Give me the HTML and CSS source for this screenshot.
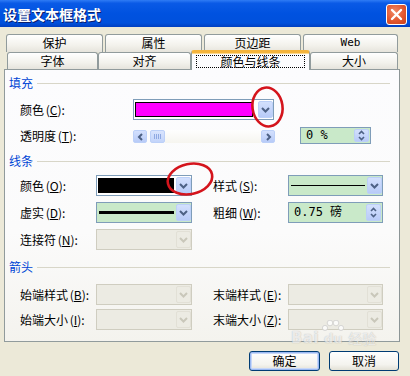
FILE: index.html
```html
<!DOCTYPE html>
<html lang="zh-CN">
<head>
<meta charset="utf-8">
<title>设置文本框格式</title>
<link rel="stylesheet" href="styles.css">
</head>
<body>
<div class="window">
  <div class="titlebar">
    <span class="title">设置文本框格式</span>
    <span class="close"><svg width="13" height="13" viewBox="0 0 13 13"><path d="M2 2L11 11M11 2L2 11" stroke="#fff" stroke-width="2.4" stroke-linecap="round"/></svg></span>
  </div>
  <div class="tabs">
    <div class="tabrow row1">
      <div class="tab w97">保护</div>
      <div class="tab w97">属性</div>
      <div class="tab w97">页边距</div>
      <div class="tab w95 latin">Web</div>
    </div>
    <div class="tabrow row2">
      <div class="tab w91">字体</div>
      <div class="tab w93">对齐</div>
      <div class="tab sel w119"><span class="focus">颜色与线条</span></div>
      <div class="tab w88">大小</div>
    </div>
  </div>
  <div class="panel">
    <div class="sec-head">填充</div>
    <div class="row r-fill1">
      <span class="lbl l113">颜色 (<u>C</u>):</span>
      <div class="combo w141"><span class="swatch magenta"></span><span class="dbtn"><svg width="9" height="6" viewBox="0 0 9 6"><path d="M1 1L4.5 4.5L8 1" fill="none" stroke="#4d6185" stroke-width="2"/></svg></span></div>
    </div>
    <div class="row r-fill2">
      <span class="lbl l113">透明度 (<u>T</u>):</span>
      <div class="scroll">
        <span class="sbtn"><svg width="7" height="8" viewBox="0 0 7 8"><path d="M5 1L2 4L5 7" fill="none" stroke="#4d6185" stroke-width="2"/></svg></span>
        <span class="thumb"><span class="grip"></span></span>
        <span class="track"></span>
        <span class="sbtn"><svg width="7" height="8" viewBox="0 0 7 8"><path d="M2 1L5 4L2 7" fill="none" stroke="#4d6185" stroke-width="2"/></svg></span>
      </div>
      <div class="spin w71"><span class="val">0 %</span><span class="spbtn"><svg width="7" height="11" viewBox="0 0 7 11"><path d="M1 4L3.5 1.5L6 4M1 7L3.5 9.5L6 7" fill="none" stroke="#4d6185" stroke-width="1.6"/></svg></span></div>
    </div>

    <div class="sec-head h2">线条</div>
    <div class="row r-l1">
      <span class="lbl l76">颜色 (<u>O</u>):</span>
      <div class="combo w96"><span class="swatch black"></span><span class="dbtn"><svg width="9" height="6" viewBox="0 0 9 6"><path d="M1 1L4.5 4.5L8 1" fill="none" stroke="#4d6185" stroke-width="2"/></svg></span></div>
      <span class="lbl l75 col2">样式 (<u>S</u>):</span>
      <div class="combo green w95"><span class="linebox"><span class="ln thin"></span></span><span class="dbtn"><svg width="9" height="6" viewBox="0 0 9 6"><path d="M1 1L4.5 4.5L8 1" fill="none" stroke="#4d6185" stroke-width="2"/></svg></span></div>
    </div>
    <div class="row r-l2">
      <span class="lbl l76">虚实 (<u>D</u>):</span>
      <div class="combo green w96"><span class="linebox"><span class="ln thick"></span></span><span class="dbtn"><svg width="9" height="6" viewBox="0 0 9 6"><path d="M1 1L4.5 4.5L8 1" fill="none" stroke="#4d6185" stroke-width="2"/></svg></span></div>
      <span class="lbl l75 col2">粗细 (<u>W</u>):</span>
      <div class="spin w95"><span class="val">0.75 磅</span><span class="spbtn"><svg width="7" height="11" viewBox="0 0 7 11"><path d="M1 4L3.5 1.5L6 4M1 7L3.5 9.5L6 7" fill="none" stroke="#4d6185" stroke-width="1.6"/></svg></span></div>
    </div>
    <div class="row r-l3">
      <span class="lbl l76">连接符 (<u>N</u>):</span>
      <div class="combo dis w96"><span class="fill"></span><span class="dbtn"><svg width="9" height="6" viewBox="0 0 9 6"><path d="M1 1L4.5 4.5L8 1" fill="none" stroke="#c9c7ba" stroke-width="2"/></svg></span></div>
    </div>

    <div class="sec-head h3">箭头</div>
    <div class="row r-a1">
      <span class="lbl l76">始端样式 (<u>B</u>):</span>
      <div class="combo dis w96"><span class="fill"></span><span class="dbtn"><svg width="9" height="6" viewBox="0 0 9 6"><path d="M1 1L4.5 4.5L8 1" fill="none" stroke="#c9c7ba" stroke-width="2"/></svg></span></div>
      <span class="lbl l75 col2">末端样式 (<u>E</u>):</span>
      <div class="combo dis w95"><span class="fill"></span><span class="dbtn"><svg width="9" height="6" viewBox="0 0 9 6"><path d="M1 1L4.5 4.5L8 1" fill="none" stroke="#c9c7ba" stroke-width="2"/></svg></span></div>
    </div>
    <div class="row r-a2">
      <span class="lbl l76">始端大小 (<u>I</u>):</span>
      <div class="combo dis w96"><span class="fill"></span><span class="dbtn"><svg width="9" height="6" viewBox="0 0 9 6"><path d="M1 1L4.5 4.5L8 1" fill="none" stroke="#c9c7ba" stroke-width="2"/></svg></span></div>
      <span class="lbl l75 col2">末端大小 (<u>Z</u>):</span>
      <div class="combo dis w95"><span class="fill"></span><span class="dbtn"><svg width="9" height="6" viewBox="0 0 9 6"><path d="M1 1L4.5 4.5L8 1" fill="none" stroke="#c9c7ba" stroke-width="2"/></svg></span></div>
    </div>
  </div>
  <div class="buttons">
    <button class="btn default">确定</button>
    <button class="btn">取消</button>
  </div>

  <div class="watermark">
    <span class="wm-bai">Bai</span>
    <span class="wm-paw">
      <svg class="paw" width="22" height="12" viewBox="0 0 22 12"><circle cx="3" cy="8" r="2.6" fill="#fff" stroke="#c8c8c8" stroke-width="0.8"/><circle cx="8" cy="3" r="2.8" fill="#fff" stroke="#c8c8c8" stroke-width="0.8"/><circle cx="14" cy="3" r="2.8" fill="#fff" stroke="#c8c8c8" stroke-width="0.8"/><circle cx="19" cy="8" r="2.6" fill="#fff" stroke="#c8c8c8" stroke-width="0.8"/></svg>
      <span class="wm-du">du</span>
    </span>
    <span class="wm-cn">经验</span>
  </div>
  <svg class="annot" width="410" height="376" viewBox="0 0 410 376">
    <ellipse cx="267.5" cy="107" rx="15" ry="19.5" transform="rotate(-8 267.5 107)" fill="none" stroke="#d4141c" stroke-width="2.6"/>
    <ellipse cx="190" cy="179" rx="22.5" ry="15" transform="rotate(-12 190 179)" fill="none" stroke="#d4141c" stroke-width="2.6"/>
  </svg>
</div>
</body>
</html>
```
FILE: styles.css
```css
* { box-sizing: border-box; }
html, body { margin: 0; padding: 0; }
body {
  background: #ece9d8;
  font-family: "Noto Sans CJK SC", "DejaVu Sans", sans-serif;
  font-size: 12px;
  color: #000;
}
.window {
  position: relative;
  width: 410px;
  height: 376px;
  overflow: hidden;
  background: #ece9d8;
}
.titlebar {
  height: 27px;
  display: flex;
  align-items: center;
  justify-content: space-between;
  padding: 0 3px 0 3px;
  background: linear-gradient(#2f7cf5 0%, #0a5ae6 12%, #0052e0 50%, #0050dc 85%, #003fc0 100%);
}
.title {
  color: #fff;
  font-weight: bold;
  font-size: 14px;
  text-shadow: 1px 1px 0 #0a1e6e;
  line-height: 16px;
  margin-top: 1px;
}
.close {
  width: 21px;
  height: 21px;
  border: 1px solid #fff;
  border-radius: 3px;
  background: radial-gradient(circle at 40% 35%, #f08a68 0%, #e2572f 55%, #c8401c 100%);
  display: flex;
  align-items: center;
  justify-content: center;
  margin-top: 1px;
}
.tabs { padding-top: 7px; }
.tabrow { display: flex; }
.row1 { margin-left: 6px; gap: 2px; height: 18px; }
.row2 { margin-left: 7px; height: 17px; }
.tab {
  height: 100%;
  border: 1px solid #919b9c;
  border-bottom: none;
  border-radius: 3px 3px 0 0;
  background: linear-gradient(#ffffff, #f3f2ec 60%, #e6e4dc);
  text-align: center;
  line-height: 16px;
  font-size: 12px;
}
.latin { font-family: "DejaVu Sans Mono", monospace; font-size: 11px; }
.w97 { width: 97px; } .w95 { width: 95px; } .w91 { width: 91px; } .w93 { width: 93px; } .w119 { width: 119px; } .w88 { width: 88px; }
.tab.sel {
  position: relative;
  z-index: 2;
  height: 20px;
  margin-top: -2px;
  margin-bottom: -1px;
  background: #fcfcfe;
  border-top: 3px solid #f4b43c;
  box-shadow: inset 0 1px 0 #fcd78a;
  border-radius: 3px 3px 0 0;
  padding-top: 2px;
}
.focus {
  display: block;
  margin: 0 4px;
  height: 13px;
  border: 1px dotted #000;
  line-height: 11px;
}
.panel {
  position: relative;
  z-index: 1;
  margin-left: 4px;
  width: 396px;
  height: 273px;
  border: 1px solid #919b9c;
  border-right-color: #8c9596;
  background: linear-gradient(#fcfcfe 0%, #fbfbfb 60%, #f4f3ee 100%);
  padding: 6px 9px 0 4px;
}
.sec-head {
  height: 14px;
  display: flex;
  align-items: center;
  gap: 4px;
  color: #0046d5;
  line-height: 14px;
}
.sec-head::after {
  content: "";
  flex: 1;
  height: 1px;
  background: #d8d6c8;
  margin-top: 1px;
}
.h2, .h3 { margin-top: 10px; }
.row {
  display: flex;
  align-items: center;
  padding-left: 11px;
}
.r-fill1 { margin-top: 9px; height: 21px; }
.r-fill2 { margin-top: 7px; height: 17px; }
.r-l1 { margin-top: 7px; height: 21px; }
.r-l2 { margin-top: 6px; height: 21px; }
.r-l3 { margin-top: 6px; height: 21px; }
.r-a1 { margin-top: 10px; height: 21px; }
.r-a2 { margin-top: 4px; height: 21px; }
.lbl { white-space: nowrap; line-height: 14px; word-spacing: -1px; }
.lbl u { text-decoration: underline; text-underline-offset: 1px; }
.l113 { width: 113px; }
.l76 { width: 76px; }
.l75 { width: 75px; }
.col2 { margin-left: 21px; }
.combo {
  height: 21px;
  border: 1px solid #7f9db9;
  background: #fff;
  display: flex;
  align-items: center;
  padding: 1px 0 1px 1px;
}
.w141 { width: 141px; }
.w96 { width: 96px; }
.w95 { width: 95px; }
.w71 { width: 71px; }
.swatch {
  flex: 1;
  height: 15px;
  margin-right: 5px;
  border: 1px solid #000;
}
.magenta { background: #ff00ff; }
.black { background: #000; margin-right: 2px; }
.dbtn {
  width: 15px;
  height: 17px;
  border: 1px solid #bcd0f8;
  border-radius: 2px;
  background: linear-gradient(#d3e0fd, #b8cbf8);
  display: flex;
  align-items: center;
  justify-content: center;
  flex: none;
}
.green { background: #c9e9c9; }
.linebox {
  flex: 1;
  height: 17px;
  display: flex;
  align-items: center;
  padding: 0 2px 0 1px;
}
.ln { flex: 1; background: #000; }
.ln.thin { height: 1px; }
.ln.thick { height: 3px; }
.dis {
  background: #ecebe3;
  border-color: #cfcdc0;
}
.dis .fill { flex: 1; }
.dis .dbtn {
  background: #ecebe3;
  border-color: #e2e0d6;
}
.scroll {
  width: 142px;
  height: 13px;
  display: flex;
  align-items: center;
  margin-top: 2px;
}
.sbtn {
  width: 14px;
  height: 13px;
  border: 1px solid #bcd0f8;
  border-radius: 2px;
  background: linear-gradient(#d3e0fd, #b8cbf8);
  display: flex;
  align-items: center;
  justify-content: center;
  flex: none;
}
.thumb {
  width: 15px;
  height: 13px;
  margin-left: 3px;
  border: 1px solid #bcd0f8;
  border-radius: 2px;
  background: linear-gradient(#d9e4fd, #c3d4fa);
  display: flex;
  align-items: center;
  justify-content: center;
}
.grip {
  width: 7px;
  height: 5px;
  background: repeating-linear-gradient(90deg, #8fa9e2 0 1px, transparent 1px 2px);
}
.track {
  flex: 1;
  height: 13px;
  background: linear-gradient(#fefefe, #f6f5ef);
}
.spin {
  height: 17px;
  margin-left: 25px;
  border: 1px solid #7f9db9;
  background: #c9e9c9;
  display: flex;
  align-items: center;
  padding: 1px;
}
.r-l2 .spin { height: 21px; margin-left: 0; }
.val {
  flex: 1;
  padding-left: 4px;
  font-family: "DejaVu Sans Mono", "Noto Sans CJK SC", monospace;
  font-size: 12px;
  line-height: 13px;
  color: #000;
}
.spbtn {
  width: 15px;
  height: 100%;
  border: 1px solid #bcd0f8;
  border-radius: 2px;
  background: linear-gradient(#d3e0fd, #b8cbf8);
  display: flex;
  align-items: center;
  justify-content: center;
  flex: none;
}
.buttons {
  display: flex;
  justify-content: flex-end;
  gap: 9px;
  padding-right: 11px;
  margin-top: 9px;
}
.btn {
  width: 70px;
  height: 20px;
  font-family: "Noto Sans CJK SC", sans-serif;
  font-size: 12px;
  line-height: 16px;
  padding: 0;
  border: 1px solid #003c74;
  border-radius: 3px;
  background: linear-gradient(#ffffff, #f4f3ee 70%, #e3e1d6);
  color: #000;
}
.btn.default {
  width: 71px;
  box-shadow: inset 0 0 0 1px #9bb8f2, inset 0 0 0 2px #c8d8f8;
}
.watermark {
  position: absolute;
  left: 291px;
  top: 320px;
  display: flex;
  align-items: flex-end;
  font-family: "DejaVu Sans", sans-serif;
  font-weight: bold;
  color: rgba(255, 255, 255, 0.75);
  text-shadow: 0 0 1px rgba(140, 140, 140, 0.8);
  pointer-events: none;
  z-index: 5;
  opacity: 0.8;
}
.wm-bai { font-size: 15px; line-height: 16px; letter-spacing: 0.5px; }
.wm-paw {
  display: flex;
  flex-direction: column;
  align-items: center;
  margin-left: 3px;
}
.paw { display: block; }
.wm-du { font-size: 13px; line-height: 14px; }
.wm-cn { font-size: 14px; line-height: 16px; margin-left: 4px; font-family: "Noto Sans CJK SC", sans-serif; font-weight: normal; }
.annot {
  position: absolute;
  left: 0;
  top: 0;
  z-index: 6;
  pointer-events: none;
}
```
